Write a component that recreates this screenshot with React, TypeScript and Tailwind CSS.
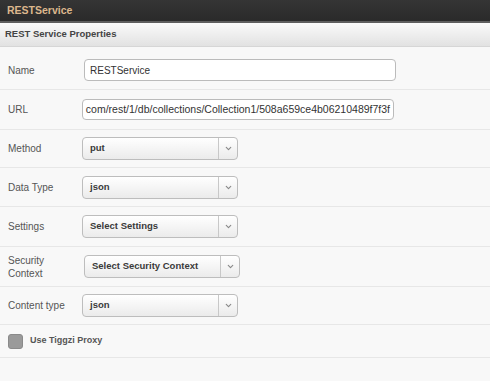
import { ChevronDown } from "lucide-react";
import type { ReactNode } from "react";

const URL_VALUE =
  "com/rest/1/db/collections/Collection1/508a659ce4b06210489f7f3f";

function Row({
  label,
  height,
  children,
}: {
  label: ReactNode;
  height: string;
  children: ReactNode;
}) {
  return (
    <div className={`flex items-center border-b border-[#e7e7e7] ${height}`}>
      <div className="w-[82px] shrink-0 pl-2 text-[10px] leading-[13px] text-[#555]">
        {label}
      </div>
      {children}
    </div>
  );
}

function Select({ value, width }: { value: string; width: string }) {
  return (
    <div
      className={`flex h-[23px] items-stretch rounded-[4px] border border-[#bdbdbd] bg-gradient-to-b from-white to-[#ebebeb] ${width}`}
    >
      <div className="flex flex-1 items-center pl-[7px] text-[9.5px] font-bold text-[#3a3a3a]">
        {value}
      </div>
      <div className="flex w-[19px] items-center justify-center border-l border-[#c8c8c8] text-[#888]">
        <ChevronDown size={9} strokeWidth={3} />
      </div>
    </div>
  );
}

export default function App() {
  return (
    <div className="h-[381px] w-[490px] overflow-hidden bg-[#f8f8f8] font-['Liberation_Sans',Arial,sans-serif]">
      <div className="flex h-[21px] items-center bg-gradient-to-b from-[#353535] to-[#2a2a2a] pl-[7px] text-[10.5px] font-bold text-[#dcb78d]">
        RESTService
      </div>
      <div className="h-[2px] bg-[#5e5e5e]" />
      <div className="flex h-[24px] items-center border-b border-[#d6d6d6] bg-gradient-to-b from-[#fafafa] to-[#e2e2e2] pl-[5px] text-[9.5px] font-bold text-[#444]">
        REST Service Properties
      </div>

      <Row label="Name" height="h-[43px] pt-[4px]">
        <div className="ml-[2px] flex h-[22px] w-[312px] items-center rounded-[4px] border border-[#bbb] bg-white pl-[5px] text-[10px] text-[#333]">
          RESTService
        </div>
      </Row>
      <Row label="URL" height="h-[40px]">
        <div className="flex h-[21px] w-[312px] items-center justify-end overflow-hidden whitespace-nowrap rounded-[4px] border border-[#bbb] bg-white pr-[3px] text-[10.5px] text-[#333]">
          <span>{URL_VALUE}</span>
        </div>
      </Row>
      <Row label="Method" height="h-[38px]">
        <Select value="put" width="w-[156px]" />
      </Row>
      <Row label="Data Type" height="h-[39px]">
        <Select value="json" width="w-[156px]" />
      </Row>
      <Row label="Settings" height="h-[40px]">
        <Select value="Select Settings" width="w-[156px]" />
      </Row>
      <Row
        label={
          <>
            Security
            <br />
            Context
          </>
        }
        height="h-[40px]"
      >
        <div className="ml-[2px]">
          <Select value="Select Security Context" width="w-[156px]" />
        </div>
      </Row>
      <Row label="Content type" height="h-[38px]">
        <Select value="json" width="w-[156px]" />
      </Row>
      <div className="flex h-[33px] items-center gap-[7px] border-b border-[#e7e7e7] pl-2">
        <div className="h-[15px] w-[15px] rounded-[3px] border border-[#8a8a8a] bg-[#9a9a9a]" />
        <span className="text-[9px] font-bold text-[#555]">Use Tiggzi Proxy</span>
      </div>
    </div>
  );
}
